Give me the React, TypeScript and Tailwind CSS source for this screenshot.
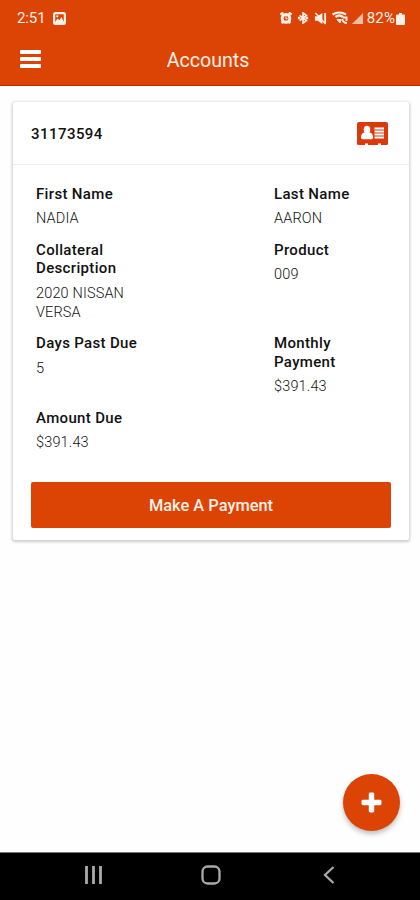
import type { ReactNode } from 'react';

interface Field {
  label: string;
  value: string;
}

const ACCOUNT_NUMBER = '31173594';

// Left and right column of each row
const rows: [Field, Field | null][] = [
  [
    { label: 'First Name', value: 'NADIA' },
    { label: 'Last Name', value: 'AARON' },
  ],
  [
    { label: 'Collateral Description', value: '2020 NISSAN VERSA' },
    { label: 'Product', value: '009' },
  ],
  [
    { label: 'Days Past Due', value: '5' },
    { label: 'Monthly Payment', value: '$391.43' },
  ],
  [{ label: 'Amount Due', value: '$391.43' }, null],
];

export default function App() {
  return (
    <div className="w-full h-[900px] flex flex-col bg-[#fefefe] font-['Roboto',sans-serif] text-[#111] overflow-hidden">
      <header className="h-[86px] shrink-0 bg-[#dc4405] border-b border-[#c52b00] text-[#fff0e8]">
        <StatusBar />
        <div className="h-[46px] px-5 grid grid-cols-[22px_1fr_22px] items-center">
          <button aria-label="Menu" className="w-[21px] flex flex-col gap-[3px]">
            <span className="h-1 w-full bg-white rounded-[1px]" />
            <span className="h-1 w-full bg-white rounded-[1px]" />
            <span className="h-1 w-full bg-white rounded-[1px]" />
          </button>
          <h1 className="text-center text-[19.6px] leading-6 pt-1 pr-1">Accounts</h1>
        </div>
      </header>

      <main className="flex-1 relative pt-4 pl-[13px]">
        <section className="h-[438px] w-[396px] bg-white rounded-[2px] shadow-[0_1px_3px_1px_rgba(0,0,0,0.2)]">
          <div className="h-[63px] pl-[18px] pr-[21px] pt-px flex items-center justify-between border-b border-[#efefef]">
            <span className="pt-0.5 text-[15px] font-medium tracking-[0.45px]">{ACCOUNT_NUMBER}</span>
            <AddressCardIcon />
          </div>

          <div className="pt-[19.5px] pl-[23px]">
            {rows.map(([left, right]) => (
              <div key={left.label} className="grid grid-cols-[238px_1fr] pb-[11.6px]">
                <FieldBlock field={left} />
                {right && <FieldBlock field={right} />}
              </div>
            ))}
          </div>

          <button className="mt-[17.3px] ml-[18px] w-[360px] h-[46px] pt-0.5 bg-[#dc4405] rounded-[2px] text-[#fff0e8] text-[16.4px] font-medium">
            Make A Payment
          </button>
        </section>

        {/* Floating add button */}
        <button
          aria-label="Add account"
          className="absolute right-5 bottom-[21px] w-[57px] h-[57px] rounded-full bg-[#dc4405] flex items-center justify-center shadow-[0_3px_5px_rgba(0,0,0,0.25)]"
        >
          <svg viewBox="0 0 20 20" fill="#fff" className="w-[21px] h-[21px] -mt-px">
            <rect x="7.4" y="0.5" width="5.2" height="19" rx="1.4" />
            <rect x="0.5" y="7.4" width="19" height="5.2" rx="1.4" />
          </svg>
        </button>
      </main>

      <NavBar />
    </div>
  );
}

function FieldBlock({ field }: { field: Field }) {
  return (
    <div className="w-[112px] text-[15px] leading-[18.7px]">
      <p className="font-medium tracking-[0.34px] w-[104px]">{field.label}</p>
      <p className="mt-[7px] text-[14.5px] font-light tracking-[0.15px] text-[#111] w-[104px]">{field.value}</p>
    </div>
  );
}

function StatusIcon({ children, className }: { children: ReactNode; className: string }) {
  return (
    <svg viewBox="0 0 14 14" fill="none" stroke="currentColor" className={className}>
      {children}
    </svg>
  );
}

function StatusBar() {
  return (
    <div className="h-[36px] pl-[17px] pr-[15px] flex items-center justify-between text-[15px] leading-5">
      <div className="flex items-center gap-[7px]">
        <span className="tracking-[-0.1px]">2:51</span>
        {/* Picture notification */}
        <StatusIcon className="w-[13px] h-[13px]">
          <rect x="1.2" y="1.2" width="11.6" height="11.6" rx="1.5" strokeWidth="2.4" />
          <path d="M2 11l3-4 2 2 2-3.5 3 5.5v1H2z" fill="currentColor" stroke="none" />
          <circle cx="4.6" cy="4.6" r="1.2" fill="currentColor" stroke="none" />
        </StatusIcon>
      </div>
      <div className="flex items-center">
        {/* Alarm */}
        <StatusIcon className="w-3 h-3 mr-[5px]">
          <path d="M0.5 3L4 1M13.5 3L10 1M2 13l2.5-2.5M12 13l-2.5-2.5" strokeWidth="3" />
          <circle cx="7" cy="7.5" r="4.5" strokeWidth="3.4" />
          <path d="M7 5v3h2" strokeWidth="1.2" />
        </StatusIcon>
        {/* Bluetooth */}
        <StatusIcon className="w-3 h-3 mr-[5px]">
          <path d="M3 4l8 6-4 3V1l4 3-8 6" strokeWidth="2" />
          <path d="M1 7h3M10 7h3" strokeWidth="2.8" />
        </StatusIcon>
        {/* Muted */}
        <StatusIcon className="w-[13px] h-[13px] mr-[5px]">
          <path d="M1 4.5h3L9 1v12L4 9.5H1z" fill="currentColor" stroke="none" />
          <path d="M1.5 1l11 12" strokeWidth="1.6" />
          <path d="M12 1v11" strokeWidth="2" />
        </StatusIcon>
        {/* Wi-Fi with a call */}
        <svg viewBox="0 0 16 14" fill="none" stroke="currentColor" className="w-4 h-[14px] mr-[3px]">
          <path d="M0.5 3.5c4-2.500 9.5-2.5 13.5 0M3.5 6c2.5-2 5-2 7.5 0" strokeWidth="2.3" />
          <path d="M5 8.5L8 12l1-3.5z" fill="currentColor" />
          <path d="M10 8c1 3 2 4 5 4M11 6.5h3.5V10" strokeWidth="2" />
        </svg>
        {/* Signal */}
        <StatusIcon className="w-[13px] h-[13px] mr-[3px]">
          <path d="M13 1v12H1z" fill="currentColor" fillOpacity="0.7" stroke="none" />
        </StatusIcon>
        <span className="tracking-[0.1px]">82%</span>
        {/* Battery */}
        <svg viewBox="0 0 9 12" fill="currentColor" className="w-[9px] h-3 ml-px mt-0.5">
          <path d="M3 0h3v1.5h2a1 1 0 011 1V11a1 1 0 01-1 1H1a1 1 0 01-1-1V2.5a1 1 0 011-1h2z" />
        </svg>
      </div>
    </div>
  );
}

function AddressCardIcon() {
  return (
    <svg viewBox="0 0 31 24" className="w-[31px] h-6">
      <path
        d="M2 0h27a2 2 0 012 2v19.5a1.5 1.5 0 01-1.5 1.5H24v-1.5h-3V23H11v-1.5H8V23H1.5A1.5 1.5 0 010 21.5V2a2 2 0 012-2z"
        fill="#d93a0c"
      />
      <ellipse cx="10" cy="7.8" rx="3.3" ry="4" fill="#fff" />
      <path d="M4 15.5c0-3.5 1.5-5 4-5h4c2.5 0 4 1.5 4 5 0 1-.5 1.7-1.5 1.7h-9c-1 0-1.5-.7-1.5-1.7z" fill="#fff" />
      <path d="M17.5 6.5H27M17.5 9.5H27M17.5 12.5H27M17.5 15.5H27" stroke="#fff" strokeWidth="1.8" />
    </svg>
  );
}

function NavBar() {
  return (
    <nav className="h-12 shrink-0 bg-black border-t border-[#777] pl-[84px] pr-[85px] pb-[3px] flex items-center justify-between text-[#aaa]">
      <svg viewBox="0 0 18 18" className="w-[18px] h-[18px]">
        <path d="M2.5 0v18M9.5 0v18M16.5 0v18" stroke="currentColor" strokeWidth="2.8" />
      </svg>
      <svg viewBox="0 0 20 20" fill="none" className="w-5 h-5 -ml-[3px]">
        <rect x="1.5" y="1.5" width="17" height="17" rx="5" stroke="currentColor" strokeWidth="2.3" />
      </svg>
      <svg viewBox="0 0 12 18" fill="none" className="w-3 h-[18px]">
        <path d="M10.5 1L2 9l8.5 8" stroke="currentColor" strokeWidth="2.3" />
      </svg>
    </nav>
  );
}
